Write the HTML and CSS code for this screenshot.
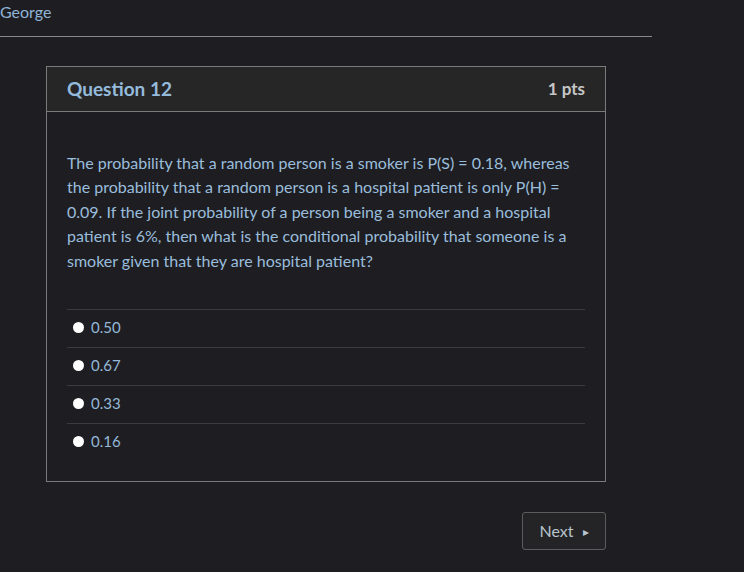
FILE: index.html
```html
<!DOCTYPE html>
<html>
<head>
<meta charset="utf-8">
<link rel="stylesheet" href="styles.css">
</head>
<body>
<div class="top">
  <div class="name">George</div>
  <div class="rule"></div>
</div>
<div class="main">
  <div class="card">
    <div class="card-head">
      <span class="qtitle">Question 12</span>
      <span class="pts">1 pts</span>
    </div>
    <div class="card-body">
      <p class="qtext">The probability that a random person is a smoker is P(S) = 0.18, whereas the probability that a random person is a hospital patient is only P(H) = 0.09. If the joint probability of a person being a smoker and a hospital patient is 6%, then what is the conditional probability that someone is a smoker given that they are hospital patient?</p>
      <div class="answers">
        <div class="answer"><span class="radio"></span><span class="label">0.50</span></div>
        <div class="answer"><span class="radio"></span><span class="label">0.67</span></div>
        <div class="answer"><span class="radio"></span><span class="label">0.33</span></div>
        <div class="answer"><span class="radio"></span><span class="label">0.16</span></div>
      </div>
    </div>
  </div>
  <div class="nav">
    <button class="next">Next <span class="arrow">&#9656;</span></button>
  </div>
</div>
</body>
</html>
```
FILE: styles.css
```css
html, body {
  margin: 0;
  padding: 0;
  background: #1e1e22;
  font-family: Lato, "Open Sans", sans-serif;
  color: #94b8d8;
}
.top {
  width: 652px;
}
.name {
  font-size: 16px;
  line-height: 22px;
  padding-top: 1px;
  color: #8fb4d6;
}
.rule {
  height: 1px;
  background: #8a8a88;
  margin-top: 13px;
}
.main {
  width: 560px;
  margin-left: 46px;
  padding-top: 29px;
}
.card {
  border: 1px solid #7a7a7a;
}
.card-head {
  height: 44px;
  background: #262626;
  border-bottom: 1px solid #7a7a7a;
  display: flex;
  align-items: center;
  justify-content: space-between;
  padding: 0 20px 0 20px;
}
.qtitle {
  font-size: 19px;
  font-weight: 700;
  color: #95bbdc;
  margin-top: -2px;
}
.pts {
  font-size: 17px;
  font-weight: 700;
  color: #c6c6c6;
  margin-top: -2px;
}
.card-body {
  padding: 39px 20px 20px 20px;
}
.qtext {
  margin: 0;
  font-size: 16px;
  line-height: 24.4px;
  color: #9abddc;
}
.answers {
  margin-top: 36px;
}
.answer {
  border-top: 1px solid #3c3c40;
  display: flex;
  align-items: center;
  padding-left: 6px;
  padding-bottom: 4px;
  box-sizing: border-box;
  height: 38px;
}
.radio {
  width: 11px;
  height: 11px;
  border-radius: 50%;
  background: #ffffff;
  margin-right: 7px;
  margin-top: 2px;
}
.label {
  font-size: 15px;
  color: #94b8d8;
}
.nav {
  display: flex;
  justify-content: flex-end;
  margin-top: 30px;
}
.next {
  width: 84px;
  height: 38px;
  background: #242426;
  border: 1px solid #5c5c5c;
  border-radius: 3px;
  font-family: Lato, "Open Sans", sans-serif;
  font-size: 16px;
  color: #b8c4ce;
  padding: 0 0 2px 0;
}
.arrow {
  font-size: 12px;
  margin-left: 5px;
  vertical-align: 1px;
}
```
